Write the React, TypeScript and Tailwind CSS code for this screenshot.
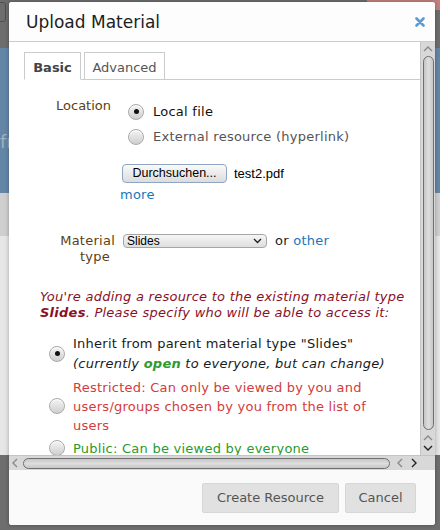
import React from "react";

const Radio = ({ checked }: { checked?: boolean }) => (
  <span className="relative inline-flex h-[16px] w-[16px] shrink-0 items-center justify-center rounded-full border border-[#a9a9a9] bg-gradient-to-b from-[#f4f4f4] to-[#cfcfcf] shadow-[inset_0_1px_1px_#fff]">
    {checked ? <span className="h-[5px] w-[5px] rounded-full bg-[#111]" /> : null}
  </span>
);

const Chevron = ({ dir, dark }: { dir: "up" | "down" | "left" | "right"; dark?: boolean }) => {
  const d = {
    up: "M1 6 L5 2 L9 6",
    down: "M1 2 L5 6 L9 2",
    left: "M6 1 L2 5 L6 9",
    right: "M2 1 L6 5 L2 9",
  }[dir];
  const box = dir === "up" || dir === "down" ? "0 0 10 8" : "0 0 8 10";
  const w = dir === "up" || dir === "down" ? 10 : 8;
  const h = dir === "up" || dir === "down" ? 8 : 10;
  return (
    <svg width={w} height={h} viewBox={box}>
      <path d={d} fill="none" stroke={dark ? "#222" : "#8a8a8a"} strokeWidth="1.4" />
    </svg>
  );
};

export default function App() {
  return (
    <div className="relative h-[530px] w-[440px] overflow-hidden bg-[#6d6d6d] font-['DejaVu_Sans',sans-serif] text-[13px]">
      {/* page behind the overlay */}
      <div className="flex h-[48px] items-start justify-between">
        <div className="ml-[-4px] mt-[2px] h-[20px] w-[10px] rounded-[3px] border border-[#4f4f4f]" />
        <div className="h-[10px] w-[73px] bg-[#c47f7f]" />
      </div>
      <div className="h-[145px] bg-[#6486a6] pt-[80px] text-[18px] text-[#9fb0c0]">fr</div>
      <div className="h-[43px] bg-[#cfcfcf]" />
      <div className="h-[219px] bg-[#e6e6e6]" />
      <div className="h-[75px] bg-[#6e6e6e]" />

      {/* dialog */}
      <div className="absolute left-[9px] top-[2px] flex h-[523px] w-[426px] flex-col overflow-hidden rounded-[3px] bg-white shadow-[0_0_4px_rgba(0,0,0,0.3)]">
        <div className="flex h-[40px] shrink-0 items-center justify-between border-b border-[#cccccc] bg-[#fdfdfd] pl-[17px] pr-[10px] pt-[3px]">
          <span className="text-[17px] text-[#1e1e1e]">Upload Material</span>
          <svg width="10" height="10" viewBox="0 0 10 10" className="mb-[2px]">
            <path d="M1.5 1.5 L8.5 8.5 M8.5 1.5 L1.5 8.5" stroke="#5b9bd1" strokeWidth="2.6" strokeLinecap="round" />
          </svg>
        </div>

        <div className="flex h-[428px] shrink-0 flex-col">
          <div className="flex h-[413px]">
            {/* scrolled content */}
            <div className="w-[411px] overflow-hidden pl-[15px] pt-[10px] tracking-[0.25px]">
              <div className="flex gap-[3px] border-b border-[#cccccc]">
                <div className="-mb-px flex h-[28px] w-[57px] items-center justify-center border border-b-white border-[#cccccc] bg-white pt-[3px] font-bold tracking-normal text-[#444]">
                  Basic
                </div>
                <div className="flex h-[27px] w-[81px] items-center justify-center border border-b-0 border-[#cccccc] pt-[3px] tracking-normal text-[#555]">
                  Advanced
                </div>
              </div>

              <div className="mt-[19px] flex">
                <div className="w-[87px] pt-[0px] text-right leading-[14px] tracking-normal text-[#5a4212]">Location</div>
                <div className="ml-[17px] flex flex-col">
                  <label className="flex h-[25px] items-center gap-[9px] text-[#111]">
                    <Radio checked />
                    Local file
                  </label>
                  <label className="flex h-[25px] items-center gap-[9px] text-[#555]">
                    <Radio />
                    External resource (hyperlink)
                  </label>
                </div>
              </div>

              <div className="ml-[98px] mt-[15px] flex items-center gap-[7px] font-['Liberation_Sans',Arial,sans-serif] text-[13px] tracking-normal text-black">
                <button className="h-[19px] w-[105px] rounded-[4px] border border-[#8ea6c4] bg-gradient-to-b from-[#fafafa] to-[#dcdcdc] text-[12.5px] leading-[17px]">
                  Durchsuchen...
                </button>
                <span>test2.pdf</span>
              </div>
              <div className="ml-[96px] mt-[4px] leading-[14px] text-[#1a74ba]">more</div>

              <div className="mt-[31px] flex">
                <div className="w-[91px] text-right leading-[16px] text-[#5a4212]">
                  <div>Material</div>
                  <div className="pr-[5px]">type</div>
                </div>
                <div className="ml-[8px] flex h-[16px] items-center gap-[8px]">
                  <div className="flex h-[14px] w-[144px] items-center justify-between rounded-[4px] border border-[#a5a5a5] bg-gradient-to-b from-[#f6f6f6] to-[#dedede] pl-[3px] pr-[4px] font-['Liberation_Sans',Arial,sans-serif] text-[12px] leading-[12px] tracking-normal text-black">
                    <span>Slides</span>
                    <svg width="9" height="6" viewBox="0 0 9 6">
                      <path d="M1 1 L4.5 4.5 L8 1" fill="none" stroke="#222" strokeWidth="1.4" />
                    </svg>
                  </div>
                  <span className="text-[#222]">
                    or <span className="text-[#1a74ba]">other</span>
                  </span>
                </div>
              </div>

              <p className="mt-[24px] w-[385px] pl-[16px] italic leading-[16px] text-[#8a1027]">
                You're adding a resource to the existing material type <b>Slides</b>. Please specify who will be able to access it:
              </p>

              <div className="mt-[13px] flex items-center pl-[25px]">
                <Radio checked />
                <div className="ml-[8px] leading-[20px] text-[#1a1a1a]">
                  <div>Inherit from parent material type "Slides"</div>
                  <div className="italic">
                    (currently <b className="text-[#2e9a2e]">open</b> to everyone, but can change)
                  </div>
                </div>
              </div>

              <div className="mt-[4px] flex items-center pl-[25px]">
                <Radio />
                <div className="ml-[8px] w-[315px] leading-[19px] text-[#d23c3c]">
                  Restricted: Can only be viewed by you and users/groups chosen by you from the list of users
                </div>
              </div>

              <div className="mt-[4px] flex items-center pl-[25px]">
                <Radio />
                <div className="ml-[8px] leading-[19px] text-[#2a9a2a]">Public: Can be viewed by everyone</div>
              </div>
            </div>

            {/* vertical scrollbar */}
            <div className="flex w-[15px] flex-col items-center border-l border-[#c4c4c4] bg-[#d8d8d8]">
              <div className="mt-[2px] flex h-[9px] items-center">
                <Chevron dir="up" />
              </div>
              <div className="mt-[3px] h-[374px] w-[11px] rounded-full border-[1.5px] border-[#6f6f6f] bg-gradient-to-r from-[#c6c6c6] via-[#dedede] to-[#c6c6c6]" />
              <div className="mt-[3px] flex h-[9px] items-center">
                <Chevron dir="up" />
              </div>
              <div className="mt-[1px] flex h-[9px] items-center">
                <Chevron dir="down" dark />
              </div>
            </div>
          </div>

          {/* horizontal scrollbar */}
          <div className="flex h-[15px] items-center border-t border-[#c4c4c4] bg-[#d8d8d8] pl-[2px]">
            <Chevron dir="left" />
            <div className="ml-[4px] h-[11px] w-[367px] rounded-full border-[1.5px] border-[#6f6f6f] bg-gradient-to-b from-[#c6c6c6] via-[#dedede] to-[#c6c6c6]" />
            <div className="ml-[6px]">
              <Chevron dir="left" />
            </div>
            <div className="ml-[6px]">
              <Chevron dir="right" dark />
            </div>
          </div>
        </div>

        <div className="flex flex-1 items-start justify-end gap-[6px] bg-[#fafafa] pr-[19px] pt-[13px]">
          <button className="h-[30px] w-[137px] rounded-[2px] border border-[#d6d6d6] bg-[#e1e1e1] text-[13px] text-[#555]">
            Create Resource
          </button>
          <button className="h-[30px] w-[71px] rounded-[2px] border border-[#d6d6d6] bg-[#e1e1e1] text-[13px] text-[#555]">
            Cancel
          </button>
        </div>
      </div>
    </div>
  );
}
